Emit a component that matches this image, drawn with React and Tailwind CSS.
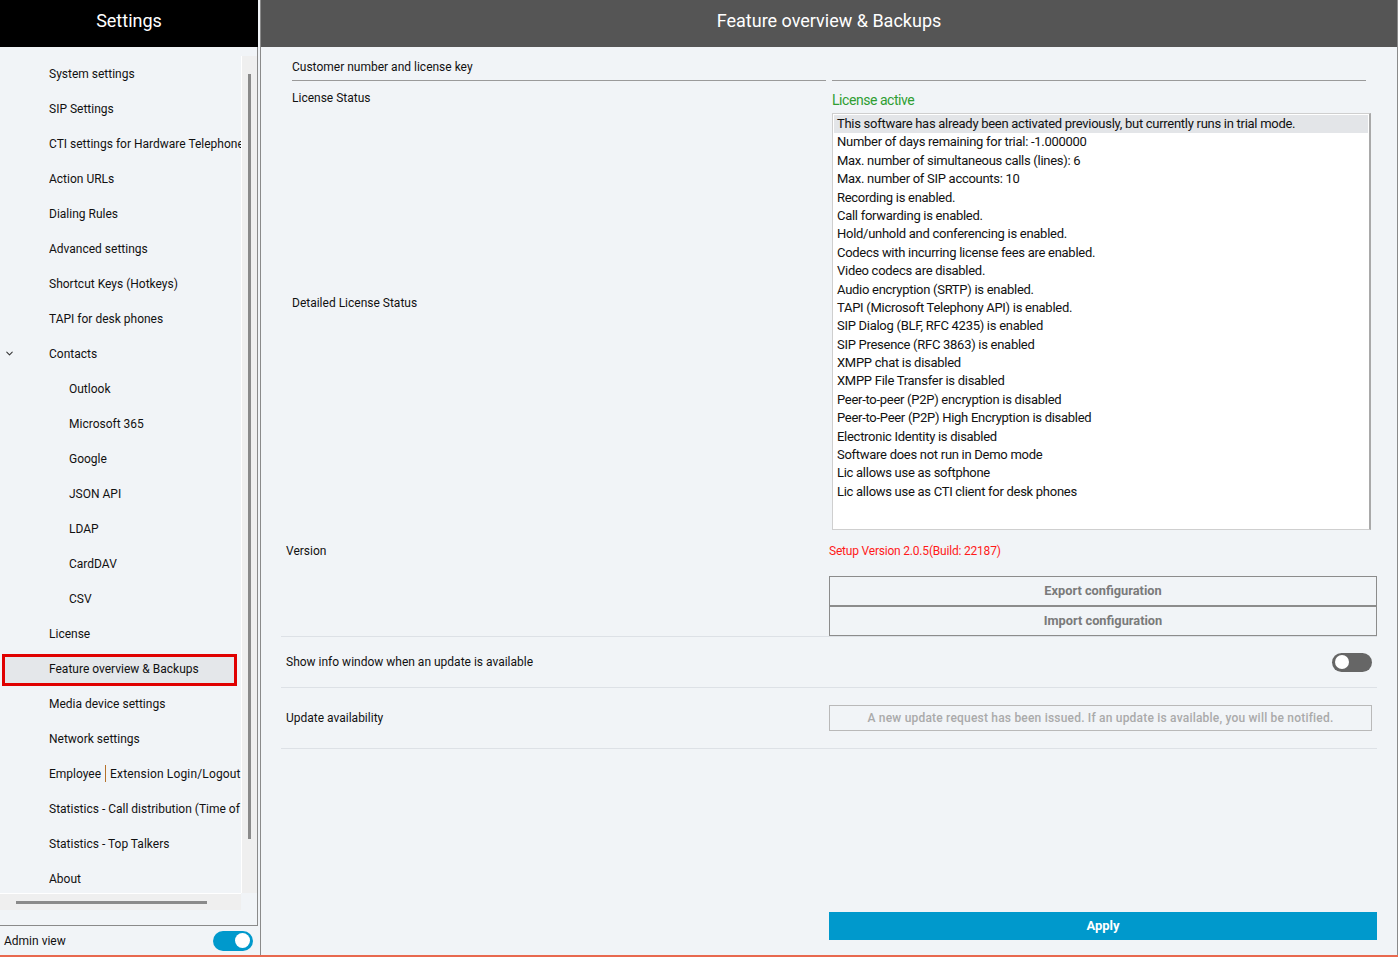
import { ChevronDown } from "lucide-react";

const navItems = [
  { label: "System settings" },
  { label: "SIP Settings" },
  { label: "CTI settings for Hardware Telephones" },
  { label: "Action URLs" },
  { label: "Dialing Rules" },
  { label: "Advanced settings" },
  { label: "Shortcut Keys (Hotkeys)" },
  { label: "TAPI for desk phones" },
  { label: "Contacts", expanded: true },
  { label: "Outlook", sub: true },
  { label: "Microsoft 365", sub: true },
  { label: "Google", sub: true },
  { label: "JSON API", sub: true },
  { label: "LDAP", sub: true },
  { label: "CardDAV", sub: true },
  { label: "CSV", sub: true },
  { label: "License" },
  { label: "Feature overview & Backups", active: true },
  { label: "Media device settings" },
  { label: "Network settings" },
  { label: "Employee", extra: "Extension Login/Logout" },
  { label: "Statistics - Call distribution (Time of day)" },
  { label: "Statistics - Top Talkers" },
  { label: "About" },
];

const licenseLines = [
  "This software has already been activated previously, but currently runs in trial mode.",
  "Number of days remaining for trial: -1.000000",
  "Max. number of simultaneous calls (lines): 6",
  "Max. number of SIP accounts: 10",
  "Recording is enabled.",
  "Call forwarding is enabled.",
  "Hold/unhold and conferencing is enabled.",
  "Codecs with incurring license fees are enabled.",
  "Video codecs are disabled.",
  "Audio encryption (SRTP) is enabled.",
  "TAPI (Microsoft Telephony API) is enabled.",
  "SIP Dialog (BLF, RFC 4235) is enabled",
  "SIP Presence (RFC 3863) is enabled",
  "XMPP chat is disabled",
  "XMPP File Transfer is disabled",
  "Peer-to-peer (P2P) encryption is disabled",
  "Peer-to-Peer (P2P) High Encryption is disabled",
  "Electronic Identity is disabled",
  "Software does not run in Demo mode",
  "Lic allows use as softphone",
  "Lic allows use as CTI client for desk phones",
];

const NavRow = ({ item }) => {
  if (item.active) {
    return (
      <div className="h-[35px] flex items-end">
        <div className="ml-[2px] w-[235px] h-[32px] border-[3px] border-[#e00000] bg-[#e4e7ea] flex items-center pl-[44px] pb-[2px] whitespace-nowrap">
          {item.label}
        </div>
      </div>
    );
  }

  return (
    <div className="h-[35px] flex items-center whitespace-nowrap">
      <span className="w-[49px] shrink-0 pl-[4px] flex items-center">
        {item.expanded && <ChevronDown size={11} strokeWidth={2.2} className="text-[#333]" />}
      </span>
      <span className={item.sub ? "pl-[20px]" : ""}>{item.label}</span>
      {item.extra && (
        <>
          <span className="mx-[4px] h-[17px] border-l border-[#b5712a]" />
          <span className="tracking-[0.15px]">{item.extra}</span>
        </>
      )}
    </div>
  );
};

const Sidebar = () => (
  <aside className="w-[258px] shrink-0 flex flex-col">
    <div className="h-[47px] bg-black text-white text-[18px] flex items-center justify-center pb-[6px]">
      Settings
    </div>
    <div className="flex-1 flex flex-col border-r border-b border-[#8a8a8a] pt-[9px]">
      <div className="flex h-[837px]">
        <div className="w-[241px] overflow-hidden text-[12px] text-[#111]">
          {navItems.map((item) => (
            <NavRow key={item.label} item={item} />
          ))}
        </div>
        <div className="w-[16px] bg-[#efefef] border-l border-white flex justify-center pt-[18px]">
          <div className="w-[3px] h-[765px] bg-[#8a8a8a]" />
        </div>
      </div>
      <div className="w-[241px] h-[17px] bg-[#efefef] border-t border-white flex items-center pl-[16px]">
        <div className="w-[191px] h-[3px] bg-[#8a8a8a]" />
      </div>
    </div>
    <div className="h-[29px] flex items-center justify-between pl-[4px] pr-[5px] text-[12px] text-[#111]">
      <span>Admin view</span>
      <div className="w-[40px] h-[20px] rounded-full bg-[#0099cc] flex items-center justify-end pr-[3px]">
        <div className="w-[15px] h-[15px] rounded-full bg-white" />
      </div>
    </div>
  </aside>
);

const MainPanel = () => (
  <main className="ml-[2px] flex-1 flex flex-col border-l border-r border-[#8a8a8a] text-[12px] text-[#111]">
    <div className="h-[47px] bg-[#555555] text-white text-[18px] flex items-center justify-center pb-[6px]">
      Feature overview &amp; Backups
    </div>

    <div className="ml-[31px] w-[1074px] grid grid-cols-[534px_534px] gap-x-[6px]">
      <div className="mt-[6px] h-[28px] flex items-center border-b border-[#9a9a9a]">
        Customer number and license key
      </div>
      <div className="mt-[6px] h-[28px] border-b border-[#9a9a9a]" />

      <div className="flex flex-col">
        <div className="pt-[10px] leading-[15px]">License Status</div>
        <div className="mt-[190px] leading-[15px]">Detailed License Status</div>
      </div>
      <div className="flex flex-col">
        <div className="pt-[10px] leading-[18px] text-[14px] text-[#2f9e32] tracking-[-0.45px]">License active</div>
        <div className="mt-[4px] w-[539px] h-[417px] bg-white border border-[#cfcfcf] border-r-2 border-r-[#a9a9a9] px-px pt-[1px] overflow-hidden">
          {licenseLines.map((line, i) => (
            <div
              key={line}
              className={`pl-[3px] h-[18.4px] leading-[18.4px] text-[13px] tracking-[-0.28px] whitespace-nowrap ${i === 0 ? "bg-[#e3e5e8]" : ""}`}
            >
              {line}
            </div>
          ))}
        </div>
      </div>
    </div>

    <div className="ml-[20px] w-[1096px] flex flex-col">
      <div className="grid grid-cols-[548px_548px] border-b border-[#dde1e6]">
        <div className="pl-[5px] pt-[14px] leading-[15px]">Version</div>
        <div className="flex flex-col">
          <div className="pt-[14px] leading-[15px] text-[#ff1a1a] tracking-[-0.2px]">Setup Version 2.0.5(Build: 22187)</div>
          <div className="mt-[17px] h-[30px] border border-[#8c8c8c] flex items-center justify-center font-bold text-[12.8px] text-[#7a7a7a]">
            Export configuration
          </div>
          <div className="h-[30px] border border-[#8c8c8c] flex items-center justify-center font-bold text-[12.8px] text-[#7a7a7a]">
            Import configuration
          </div>
        </div>
      </div>

      <div className="h-[51px] flex items-center justify-between pl-[5px] pr-[5px] border-b border-[#dde1e6]">
        <span>Show info window when an update is available</span>
        <div className="w-[40px] h-[19px] rounded-full bg-[#666666] flex items-center pl-[3px]">
          <div className="w-[14px] h-[14px] rounded-full bg-white" />
        </div>
      </div>

      <div className="h-[61px] grid grid-cols-[548px_548px] items-center border-b border-[#dde1e6]">
        <div className="pl-[5px]">Update availability</div>
        <div className="w-[543px] h-[26px] border border-[#b9b9b9] flex items-center justify-center text-[12px] font-medium tracking-[0.2px] text-[#aaaaaa]">
          A new update request has been issued. If an update is available, you will be notified.
        </div>
      </div>
    </div>

    <div className="mt-auto mb-[15px] ml-[568px] w-[548px] h-[28px] bg-[#0099cc] text-white font-bold text-[13px] flex items-center justify-center">
      Apply
    </div>
  </main>
);

export default function App() {
  return (
    <div
      className="w-[1398px] h-[957px] flex flex-col bg-[#f1f4f7] overflow-hidden"
      style={{ fontFamily: "Roboto, 'Noto Sans', sans-serif" }}
    >
      <div className="flex-1 flex min-h-0">
        <Sidebar />
        <MainPanel />
      </div>
      <div className="h-[2px] bg-[#e8694f]" />
    </div>
  );
}
